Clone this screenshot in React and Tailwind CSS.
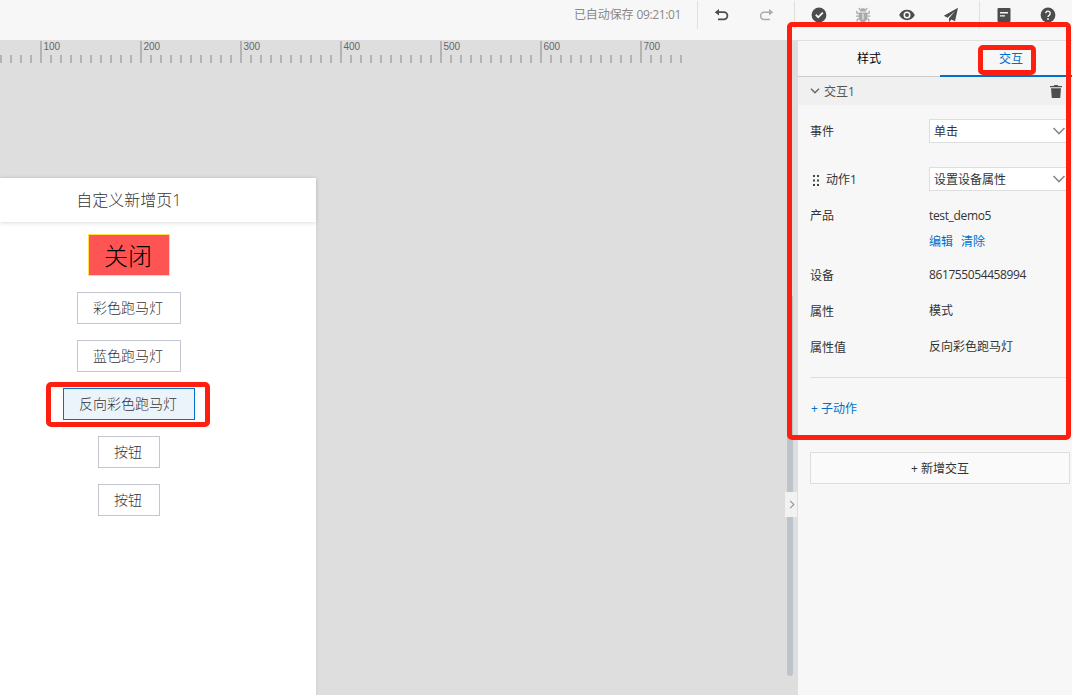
import React from 'react';

const ticks = Array.from({ length: 69 }, (_, i) => i);

function Ruler() {
  return (
    <div className="flex h-[23px] items-end font-['Liberation_Sans',sans-serif]">
      {ticks.map((i) => {
        const major = i % 10 === 4;
        return (
          <div key={i} className="flex h-full w-[10px] shrink-0 items-end">
            <div className={major ? 'h-[22px] w-[2px] shrink-0 bg-[#b3b3b3]' : 'h-2 w-[2px] shrink-0 bg-[#b3b3b3]'} />
            {major && (
              <span className="ml-[1.5px] self-start pt-px text-[10px] leading-[12px] text-[#666]">
                {((i - 4) / 10 + 1) * 100}
              </span>
            )}
          </div>
        );
      })}
    </div>
  );
}

function Icon({ children, className = 'text-[#4d4d4d]' }) {
  return (
    <svg viewBox="0 0 16 16" className={`block h-4 w-4 shrink-0 ${className}`} fill="currentColor">
      {children}
    </svg>
  );
}

function Toolbar() {
  return (
    <header className="flex h-10 shrink-0 items-start bg-[#f7f7f7]">
      <div className="w-[697px] pr-4 pt-1.5 text-right text-[12px] leading-[18px] tracking-[-0.1px] text-[#888]">
        已自动保存 <span className="tracking-[-0.37px]">09:21:01</span>
      </div>
      <div className="mt-px flex h-7 w-[98px] items-center gap-7 border-x border-[#e0e0e0] pl-4">
        <Icon>
          <path d="M.8 5.200 5 2v2.300h4.800a4.500 4.500 0 0 1 0 9H4v-1.800h5.800a2.700 2.700 0 0 0 0-5.400H5v2.300z" />
        </Icon>
        <Icon className="text-[#aaa]">
          <path d="M15.200 5.200 11 2v2.500H6.200a4.300 4.300 0 0 0 0 8.700H12v-1.500H6.200a2.800 2.800 0 0 1 0-5.700H11v2.400z" />
        </Icon>
      </div>
      <div className="mt-px flex h-7 w-[185px] items-center gap-7 border-r border-[#e0e0e0] pl-4">
        <Icon>
          <path fillRule="evenodd" d="M8 .6a7.4 7.4 0 1 0 0 14.8A7.4 7.4 0 0 0 8 .6zM11.2 4.9l1.3 1.3-5.3 5.2-3-3 1.2-1.3 1.8 1.8z" />
        </Icon>
        <Icon className="text-[#aaa]">
          <path d="M4.700 4.600a3.300 3.300 0 0 1 6.600 0z" />
          <path d="M3.800 5.500h8.400v5.500a4.200 4.200 0 0 1-8.400 0z" />
          <path d="M5 2.500 3.800 1M11 2.500 12.200 1M4 7 1.800 6V3.800M12 7l2.200-1V3.800M4 9.200H.8M12 9.200h3.200M4.200 11.500l-2 1v2.300M11.800 11.500l2 1v2.300" stroke="currentColor" strokeWidth="1.300" fill="none" />
          <path d="M8 6.500v6" stroke="#f7f7f7" strokeWidth="1" />
        </Icon>
        <Icon>
          <path fillRule="evenodd" d="M.2 8C1.8 4.6 4.6 2.8 8 2.8S14.200 4.600 15.800 8C14.200 11.400 11.400 13.200 8 13.200S1.800 11.400.200 8zM8 4.500a3.500 3.500 0 1 0 0 7 3.500 3.500 0 0 0 0-7zM8 6a2 2 0 1 1 0 4 2 2 0 0 1 0-4z" />
        </Icon>
        <Icon>
          <path d="M15 .800.800 8.800l3.700 2L12 4.200 6 11.200v4l2.400-2.700 3.600 1.700z" />
        </Icon>
      </div>
      <div className="mt-px flex h-7 items-center gap-7 pl-4">
        <Icon>
          <path fillRule="evenodd" d="M2.500 1h11a1 1 0 0 1 1 1v12a1 1 0 0 1-1 1h-11a1 1 0 0 1-1-1V2a1 1 0 0 1 1-1zM4 5v1.400h8V5zM4 8.200v1.400h5V8.200z" />
        </Icon>
        <Icon>
          <circle cx="8" cy="8" r="7.400" />
          <path d="M5.800 6.300a2.200 2.200 0 1 1 3.500 1.800C8.400 8.700 8 9 8 10.100" stroke="#f7f7f7" strokeWidth="1.400" fill="none" />
          <circle cx="8" cy="12" r=".9" fill="#f7f7f7" />
        </Icon>
      </div>
    </header>
  );
}

function PageButton({ children }) {
  return (
    <div className="flex h-8 items-center border border-[#c4c6cf] bg-white pl-[15px] pr-[17px] text-[14px] leading-[20px] text-[#333]">
      {children}
    </div>
  );
}

function Canvas() {
  return (
    <main className="flex min-w-0 flex-1 flex-col overflow-hidden">
      <Ruler />
      <div className="mt-[115px] w-[316px] flex-1 bg-white font-light shadow-[0_0_4px_rgba(0,0,0,0.08)]">
        <div className="h-11 shadow-[0_1px_4px_rgba(0,0,0,0.14)]">
          <div className="w-[257px] pt-[10px] text-center text-[16px] leading-[24px] text-[#333]">
            自定义新增页<span className="tracking-[-0.5px]">1</span>
          </div>
        </div>
        <div className="flex w-[258px] flex-col items-center gap-4 pt-3">
          <div className="flex h-[42px] w-[82px] items-center justify-center border border-[#ffe14d] bg-[#ff5454] pr-0.5 pt-0.5 text-[24px] leading-[36px] text-black">
            关闭
          </div>
          <PageButton>彩色跑马灯</PageButton>
          <PageButton>蓝色跑马灯</PageButton>
          <div className="relative flex h-8 items-center border border-[#0070cc] bg-[#ebf3fb] pl-[15px] pr-[17px] text-[14px] leading-[20px] text-[#333]">
            反向彩色跑马灯
            <div className="absolute -left-[18px] -top-[7px] h-[45px] w-[164px] rounded-[5px] border-[5px] border-[#ff1f10]" />
          </div>
          <PageButton>按钮</PageButton>
          <PageButton>按钮</PageButton>
        </div>
      </div>
    </main>
  );
}

function Select({ children }) {
  return (
    <div className="flex h-6 flex-1 items-center justify-between border border-[#dedede] bg-white pl-1 pr-[3px]">
      <span className="pt-0.5">{children}</span>
      <svg viewBox="0 0 14 8" className="mb-px h-2 w-[14px]" fill="none" stroke="#888" strokeWidth="1.600">
        <path d="m1.500 1 5.500 5.500L12.500 1" />
      </svg>
    </div>
  );
}

function Row({ label, children, className }) {
  return (
    <div className={`flex h-6 items-center ${className}`}>
      <div className="flex w-[119px] shrink-0 items-center pt-0.5">{label}</div>
      {children}
    </div>
  );
}

function Panel() {
  return (
    <aside className="relative flex w-[274px] shrink-0 flex-col border-t border-[#e0e0e0] bg-[#f7f7f7] text-[12px] leading-[18px] text-[#333]">
      <div className="flex h-9">
        <div className="flex h-9 w-[142px] items-center justify-center border-b border-[#ccc] pt-px text-black">样式</div>
        <div className="relative flex h-9 flex-1 items-center justify-center border-b-2 border-[#0070cc] pl-2.5 pt-0.5 text-[#0070cc]">
          交互
          <div className="absolute left-[38px] top-1 h-[30px] w-[58px] rounded-[5px] border-[5px] border-[#ff1f10]" />
        </div>
      </div>
      <div className="flex h-7 items-center bg-[#f0f0f0] pl-3 pr-[10px] text-[#555]">
        <svg viewBox="0 0 10 6" className="mr-1 h-1.5 w-2.5" fill="none" stroke="#666" strokeWidth="1.400">
          <path d="m1 .7 4 4 4-4" />
        </svg>
        <span className="flex-1 pt-0.5">交互1</span>
        <svg viewBox="0 0 12 13" className="h-[13px] w-3" fill="#4d4d4d">
          <path d="M0 1h3.500L4.500 0h3l1 1H12v1.300H0zM1 3.200h10L10.200 13H1.800z" />
        </svg>
      </div>
      <div className="flex flex-col pl-3 pr-0.5">
        <Row label="事件" className="mt-[14px]">
          <Select>单击</Select>
        </Row>
        <Row
          className="mt-6"
          label={
            <>
              <svg viewBox="0 0 8 11" className="ml-0.5 mr-1.5 h-[11px] w-2" fill="#444">
                <path d="M1 0h2v2H1zM5 0h2v2H5zM1 4.500h2v2H1zM5 4.500h2v2H5zM1 9h2v2H1zM5 9h2v2H5z" />
              </svg>
              动作1
            </>
          }
        >
          <Select>设置设备属性</Select>
        </Row>
        <Row label="产品" className="mt-3">
          <span className="pt-0.5 tracking-[-0.350px]">test_demo5</span>
        </Row>
        <div className="mt-[3px] flex h-6 items-center gap-2 pl-[119px] text-[#0070cc]">
          <span>编辑</span>
          <span>清除</span>
        </div>
        <Row label="设备" className="mt-[9px]">
          <span className="tracking-[-0.400px]">861755054458994</span>
        </Row>
        <Row label="属性" className="mt-3">模式</Row>
        <Row label="属性值" className="mt-3">反向彩色跑马灯</Row>
        <div className="mt-[18px] h-px bg-[#dedede]" />
        <div className="mt-[22px] pl-px leading-[18px] text-[#0070cc]">+ 子动作</div>
        <div className="mt-[34px] flex h-8 items-center justify-center border border-[#dedede] bg-[#fafafa] pt-0.5">+ 新增交互</div>
      </div>
      <div className="pointer-events-none absolute -left-[11px] -top-[19px] h-[418px] w-[284px] rounded-[5px] border-[5px] border-[#ff1f10]" />
    </aside>
  );
}

export default function App() {
  return (
    <div className="flex h-[695px] w-[1072px] flex-col overflow-hidden bg-[#dedede] font-['Open_Sans','Noto_Sans_CJK_SC',sans-serif]">
      <Toolbar />
      <div className="flex min-h-0 flex-1">
        <Canvas />
        <div className="relative w-[13px] shrink-0">
          <div className="ml-[2px] mt-[255px] h-[381px] w-1.5 rounded-full bg-[#bcc3cb]" />
          <div className="absolute left-0 top-[452px] flex h-[25px] w-3 items-center justify-center bg-[#f2f2f2]">
            <svg viewBox="0 0 6 10" className="ml-0.5 h-[9px] w-1.5" fill="none" stroke="#999" strokeWidth="1.300">
              <path d="m1 1 4 4-4 4" />
            </svg>
          </div>
        </div>
        <Panel />
      </div>
    </div>
  );
}
